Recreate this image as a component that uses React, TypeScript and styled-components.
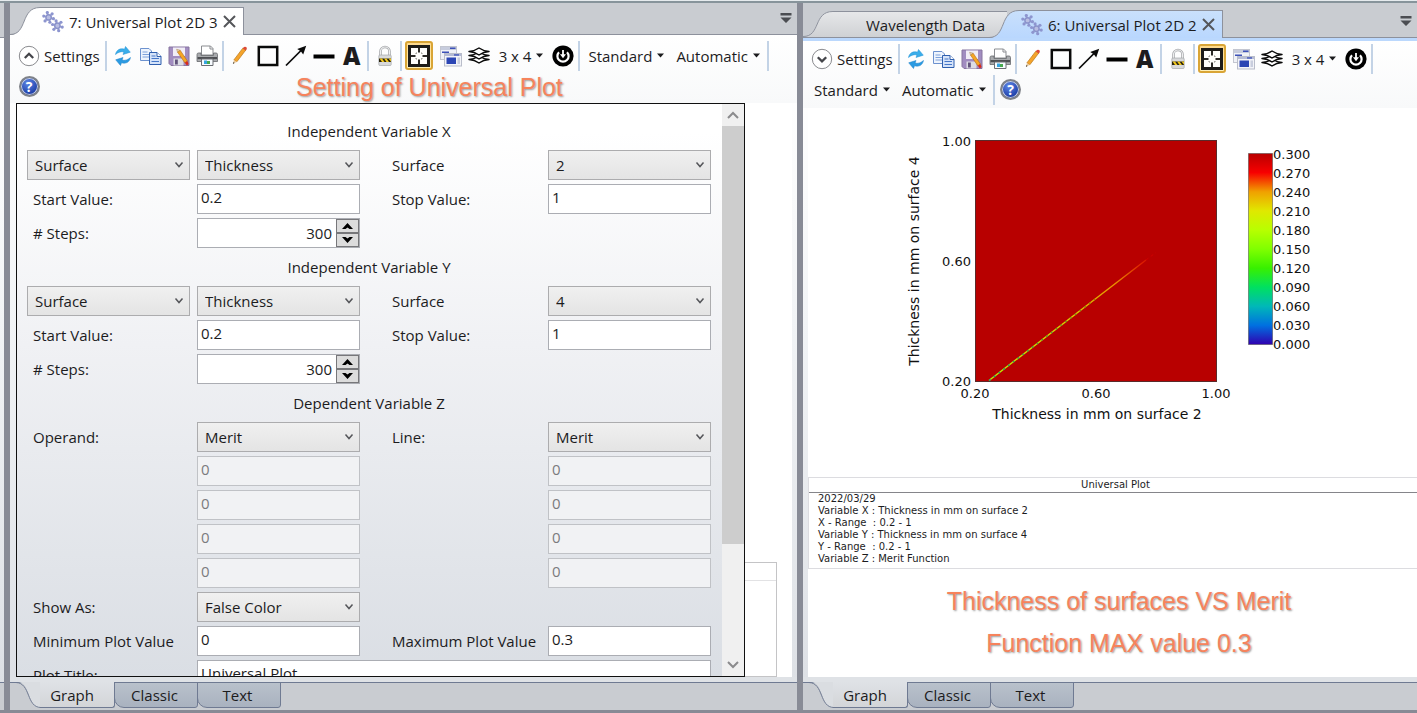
import React, { useId, useState } from "react";
import styled, { createGlobalStyle, css } from "styled-components";

const UI = `"Open Sans", "Segoe UI", sans-serif`;
const PLOT = `"DejaVu Sans", "Lucida Sans", sans-serif`;

const GlobalStyle = createGlobalStyle`
  *, *::before, *::after { box-sizing: border-box; }
  body { margin: 0; background: #c9ccd1; font-family: ${UI}; font-size: 15px; color: #1c1c1e; }
  button, input, select { font: inherit; color: inherit; }
`;

/* ---------- window frame ---------- */

const Shell = styled.div`
  height: 100vh;
  min-height: 480px;
  display: flex;
  flex-direction: column;
  border-top: 1px solid #e6ebee;
  border-bottom: 3px solid #888a95;
  overflow: hidden;
`;

const Workspace = styled.main`
  flex: 1;
  min-height: 0;
  display: grid;
  grid-template-columns: 4px 6px minmax(0, 787fr) 6px minmax(0, 614fr);
  border-top: 2px solid #87949b;
`;

const Splitter = styled.div`
  background: #888b96;
`;

const Pane = styled.section`
  min-width: 0;
  min-height: 0;
  display: flex;
  flex-direction: column;
  background: linear-gradient(#ffffff 12%, #f2f4f6 45%, #dde0e5 97%);
`;

const TabStrip = styled.div<{ $tall?: boolean }>`
  display: flex;
  align-items: flex-end;
  flex: none;
  height: ${(p) => (p.$tall ? 35 : 32)}px;
  background: #c9ccd1;
  border-bottom: 1px solid #8d919c;
`;

const ActiveStripe = styled.div`
  flex: none;
  height: 3px;
  background: #bbd8fd;
`;

type Tone = "white" | "grey" | "blue";
const toneFill: Record<Tone, [string, string]> = {
  white: ["#ffffff", "#ffffff"],
  grey: ["#e6e7e9", "#cfd1d4"],
  blue: ["#c9e0fc", "#b9d7fe"],
};

const TabShell = styled.div<{ $tone: Tone; $overlap?: boolean }>`
  display: flex;
  height: ${(p) => (p.$tone === "grey" ? 26 : 28)}px;
  margin-bottom: ${(p) => (p.$tone === "grey" ? 0 : -1)}px;
  margin-left: ${(p) => (p.$overlap ? -18 : 0)}px;
  position: relative;
`;

const TabEdge = styled.svg`
  display: block;
  width: 30px;
  height: 100%;
`;

const TabBody = styled.div<{ $tone: Tone }>`
  display: flex;
  align-items: center;
  gap: 5px;
  padding: 0 ${(p) => (p.$tone === "grey" ? 22 : 7)}px 0 ${(p) => (p.$tone === "grey" ? 33 : 2)}px;
  background: linear-gradient(${(p) => toneFill[p.$tone].join(",")});
  border-top: 1px solid #8d919c;
  border-right: ${(p) => (p.$tone === "grey" ? 0 : 1)}px solid #8d919c;
`;

const TabName = styled.button`
  border: 0;
  padding: 0;
  background: none;
  white-space: nowrap;
  line-height: 20px;
`;

const IconButton = styled.button`
  display: grid;
  place-items: center;
  border: 0;
  padding: 0;
  background: none;
`;

const StripMenu = styled(IconButton)`
  margin: 0 5px 10px auto;
`;

/* ---------- toolbar ---------- */

const Toolbar = styled.div<{ $compact: boolean }>`
  flex: none;
  display: flex;
  flex-wrap: wrap;
  align-items: center;
  padding: ${(p) => (p.$compact ? "2px 0 3px 5px" : "5px 0 1px 5px")};
  background: linear-gradient(#ffffff, #f8f9fa);
`;

const Tool = styled.button<{ $on?: boolean }>`
  display: grid;
  place-items: center;
  width: 28px;
  height: 31px;
  padding: 0;
  border: 0;
  background: none;
  ${(p) =>
    p.$on &&
    css`
      height: 29px;
      margin: 0 4px 0 1px;
      border: 2px solid #d9a536;
      border-radius: 3px;
      background: linear-gradient(#fdd98d, #fff0b8);
    `}
`;

const TextTool = styled.button`
  display: flex;
  align-items: center;
  gap: 5px;
  height: 31px;
  padding: 0 6px;
  border: 0;
  background: none;
  white-space: nowrap;
`;

const SettingsTool = styled(TextTool)`
  gap: 4px;
  padding: 0 4px 0 3px;
`;

const Divider = styled.span`
  width: 2px;
  height: 30px;
  margin: 0 2px 0 1px;
  background: #c3d3e6;
`;

const Callout = styled.p`
  margin: 0;
  font: 25px/42px "Liberation Sans", Arial, sans-serif;
  color: #f6835c;
  text-align: center;
  text-shadow: 1px 1px 2px #9a9a9a;
`;

const FloatingCallout = styled(Callout)`
  position: absolute;
  top: -37px;
  left: 280px;
  white-space: nowrap;
`;

/* ---------- content ---------- */

const Canvas = styled.div<{ $left: number; $right: number }>`
  flex: 1;
  min-height: 0;
  position: relative;
  display: flex;
  flex-direction: column;
  margin: 0 ${(p) => p.$right}px 0 ${(p) => p.$left}px;
  background: #ffffff;
`;

const HiddenReport = styled.div`
  flex: none;
  height: 115px;
  margin: auto 15px 0 0;
  border: 1px solid #c4c4c6;

  &::before {
    content: "";
    display: block;
    height: 18px;
    border-bottom: 1px solid #e2e2e4;
  }
`;

const SettingsPanel = styled.form`
  position: absolute;
  top: 0;
  bottom: 0;
  left: 0;
  width: 729px;
  display: flex;
  border: 1px solid #101010;
  background: linear-gradient(#ffffff 5%, #f0f1f4 42%, #dadee4);
`;

const Fields = styled.div`
  flex: 1;
  overflow: hidden;
  display: grid;
  grid-template-columns: 163px 163px 174px 163px;
  grid-auto-rows: 34px;
  column-gap: 7px;
  align-items: center;
  align-content: start;
  padding: 10px 10px 0;
`;

const Heading = styled.h2`
  grid-column: 1 / -1;
  margin: 0;
  font-size: 15px;
  font-weight: 400;
  text-align: center;
`;

const Label = styled.label<{ $col: 1 | 3 }>`
  grid-column: ${(p) => p.$col};
  padding-left: ${(p) => (p.$col === 1 ? 6 : 25)}px;
  white-space: nowrap;
`;

const SelectBox = styled.span<{ $col: number }>`
  grid-column: ${(p) => p.$col};
  display: grid;
  height: 30px;
  align-items: center;

  > * { grid-area: 1 / 1; }
  > svg { justify-self: end; margin-right: 6px; pointer-events: none; }
`;

const SelectInput = styled.select`
  appearance: none;
  width: 100%;
  height: 30px;
  padding: 0 20px 0 7px;
  border: 1px solid #acacae;
  border-radius: 0;
  background: linear-gradient(#f0f0f0, #e4e4e4);
`;

const TextInput = styled.input<{ $col: number; $wide?: boolean }>`
  grid-column: ${(p) => (p.$wide ? "2 / 5" : p.$col)};
  width: 100%;
  height: 30px;
  padding: 0 4px 4px 3px;
  border: 1px solid #abadb3;
  border-radius: 0;
  background: #ffffff;

  &:disabled {
    background: #f1f2f4;
    border-color: #c0c2c6;
    color: #7b7b7e;
  }
`;

const Stepper = styled.span`
  grid-column: 2;
  display: flex;
  height: 30px;
  border: 1px solid #abadb3;
  background: #ffffff;
`;

const StepValue = styled.input`
  flex: 1;
  min-width: 0;
  padding: 0 4px;
  border: 0;
  background: none;
  text-align: right;
`;

const StepButtons = styled.span`
  display: grid;
  grid-template-rows: 1fr 1fr;
  width: 23px;
`;

const StepButton = styled.button`
  display: grid;
  place-items: center;
  padding: 0;
  border: 1px solid #77777a;
  background: #dcdcdc;
`;

const ScrollTrack = styled.div`
  flex: none;
  width: 22px;
  display: grid;
  grid-template-rows: 22px 418fr 110fr 22px;
  background: #f0f0f0;
`;

const ScrollThumb = styled.div`
  background: #cdcdcd;
`;

const ChartArea = styled.svg`
  display: block;
  flex: none;
  width: 100%;
  height: 369px;
  font-family: ${PLOT};
`;

const Report = styled.div`
  flex: none;
  border: 1px solid #dcdce0;
  border-width: 1px 0 1px 1px;
  font: 10px/12px ${PLOT};
`;

const ReportTitle = styled.div`
  padding-left: 5px;
  height: 15px;
  line-height: 14px;
  text-align: center;
  border-bottom: 1px solid #85858a;
`;

const ReportBody = styled.pre`
  margin: 0;
  padding: 0 9px 3px;
  font: inherit;
`;

const Notes = styled.div`
  padding: 11px 0 0 13px;
`;

/* ---------- bottom tabs ---------- */

const BottomStrip = styled.div`
  flex: none;
  display: flex;
  height: 33px;
  padding-bottom: 2px;
  border-top: 5px solid #dfe2e6;
  background: #c9ccd1;
  box-shadow: inset 0 1px #6f7a92;
`;

const BottomTab = styled.button<{ $active?: boolean }>`
  width: 84px;
  height: 26px;
  padding: 0 3px 0 0;
  border: 1px solid #6f7a92;
  border-left-width: ${(p) => (p.$active ? 0 : 1)}px;
  border-radius: 0 0 3px 10px;
  background: linear-gradient(#b9c1cb, #a9b2bf);
  margin-left: -1px;

  ${(p) =>
    p.$active &&
    css`
      width: 75px;
      padding-right: 10px;
      margin-left: 0;
      border-top: 0;
      border-radius: 0 0 3px 0;
      background: linear-gradient(#dfe2e6, #d3d5d8);
    `}
`;

const BottomFiller = styled.div`
  height: 28px;
  margin-top: auto;
  background: #c9ccd1;
  border-top: 1px solid #6f7a92;
`;

/* ---------- icons ---------- */

const Svg = ({ s = 22, children }: { s?: number; children: React.ReactNode }) => (
  <svg width={s} height={s} viewBox="0 0 22 22" fill="none" aria-hidden="true">
    {children}
  </svg>
);

const cluster = (cx: number, cy: number) => {
  const pts = [0, 60, 120, 180, 240, 300].map((a) => {
    const r = ((a + 15) * Math.PI) / 180;
    return [cx + 5 * Math.cos(r), cy + 5 * Math.sin(r)];
  });
  return (
    <g>
      {pts.map(([x, y], i) => (
        <g key={i}>
          <path d={`M${cx} ${cy}L${x} ${y}`} stroke="#9aa1cc" strokeWidth="1.4" />
          <circle cx={x} cy={y} r="1.6" fill="#8d95cf" />
        </g>
      ))}
      <circle cx={cx} cy={cy} r="2.7" stroke="#8b93cb" strokeWidth="1.5" fill="#b9bee2" />
    </g>
  );
};

const PlotIcon = () => (
  <Svg>
    {cluster(6.6, 6.4)}
    {cluster(15.4, 14.8)}
  </Svg>
);

const CloseIcon = () => (
  <svg width="13" height="13" viewBox="0 0 13 13" aria-hidden="true">
    <path d="M1 1l11 11M12 1l-11 11" stroke="#55565a" strokeWidth="2" />
  </svg>
);

const MenuIcon = () => (
  <svg width="12" height="12" viewBox="0 0 12 12" aria-hidden="true">
    <path d="M0.500 1h11v2.500h-11zM0.500 5.500h11L6 11z" fill="#4b4d52" />
  </svg>
);

const Caret = () => (
  <svg width="7" height="5" viewBox="0 0 7 5" aria-hidden="true">
    <path d="M0 .5h7L3.500 4.500z" fill="#1c1c1e" />
  </svg>
);

const Chevron = () => (
  <svg width="10" height="8" viewBox="0 0 10 8" fill="none" aria-hidden="true">
    <path d="M1.500 1.500L5 5.500l3.500-4" stroke="#55565a" strokeWidth="1.500" />
  </svg>
);

const CircleChevron = ({ up }: { up: boolean }) => (
  <Svg>
    <circle cx="11" cy="11" r="9.700" stroke="#8a8b8f" fill="#fff" />
    <path d={up ? "M6.800 13l4.200-4.200 4.200 4.200" : "M6.800 9.200l4.200 4.200 4.200-4.200"} stroke="#44454a" strokeWidth="2.300" />
  </Svg>
);

const Refresh = () => (
  <Svg>
    <path d="M3.500 9.500C4.500 4.500 8.500 3 12.500 4.200L13.500 1.500l4.800 5.700-7.300 2.300.9-2.600C9 6.300 6.500 7 3.500 9.500z" fill="#3aaeea" stroke="#1f8fd4" strokeWidth=".5" />
    <path d="M18.500 12.500c-1 5-5 6.500-9 5.300l-1 2.700-4.800-5.700 7.300-2.300-.9 2.600c2.900.6 5.400-.1 8.400-2.600z" fill="#2b9be2" stroke="#1a7fc6" strokeWidth=".5" />
  </Svg>
);

const Copy = () => (
  <Svg>
    <path d="M.5 3.500h8.500l2.500 2.500v9.500H.5z" fill="#eef4fd" stroke="#6d92cf" />
    <path d="M2.500 7h5M2.500 9.500h7M2.500 12h7" stroke="#7ea2dc" />
    <path d="M9.500 7.500h7.500l4 4v8h-11.500z" fill="#d5e3f9" stroke="#2f5fae" />
    <path d="M17 7.500v4h4" fill="#fff" stroke="#2f5fae" />
    <path d="M11.500 11h4M11.500 13.500h7.500M11.500 16.500h7.500" stroke="#4677c8" />
  </Svg>
);

const Save = () => (
  <Svg>
    <path d="M1 2h20v18.500H3L1 18.500z" fill="#a18cc0" stroke="#87749f" />
    <path d="M5 2.500h12v8.500H5z" fill="#f1edf6" />
    <path d="M5.500 13.500h10v7h-10z" fill="#dcdde4" />
    <path d="M7 14.500h2.800v5H7z" fill="#62547c" />
    <path d="M9.500 7l2.600-1.800 7.300 10.800-2.600 1.800z" fill="#f6a623" stroke="#b56c11" strokeWidth=".6" />
    <path d="M16.800 17.800l2.600-1.800 1.200 3-1.700 1.500z" fill="#d92a1c" />
    <path d="M9.500 7L8.600 4.200l3.500 1z" fill="#f3d6a6" stroke="#8a6a3a" strokeWidth=".4" />
  </Svg>
);

const Printer = () => (
  <Svg>
    <path d="M5.500 1h9L17 3.500V10H5.500z" fill="#fff" stroke="#8b8d91" />
    <path d="M14 1v3h3" stroke="#8b8d91" />
    <path d="M1 9.500Q1 8 2.500 8H5v2.500h12.500V8H20q1.500 0 1.500 1.500V16.500H1z" fill="#a9abae" stroke="#66686c" strokeWidth=".8" />
    <path d="M1.500 12h19.500v2.200H1.500z" fill="#4e5054" />
    <path d="M5.500 14h11.500v6.500H5.500z" fill="#f7fbff" stroke="#6b6d72" />
    <path d="M8 15.500h3v3.500H8z" fill="#35a4e0" />
    <path d="M11 16h3v3h-3z" fill="#47a94f" />
  </Svg>
);

const Pencil = () => (
  <Svg>
    <path d="M13.800 3.200l3 1.800-9 11.800-2.900-1.900z" fill="#f5a42b" stroke="#b87517" strokeWidth=".7" />
    <path d="M14.600 2.200q1.200-1 2.500-.1t.5 2.400l-.8 1-3-2z" fill="#dc4b37" />
    <path d="M4.900 14.900l2.900 1.900L3.900 19z" fill="#e9c796" />
    <path d="M4.500 17l1 1L3.900 19z" fill="#333" />
  </Svg>
);

const Box = () => (
  <Svg>
    <rect x="1.800" y="2" width="18.400" height="18" stroke="#0a0a0a" strokeWidth="2.500" />
  </Svg>
);

const Arrow = () => (
  <Svg>
    <path d="M1 20.500L16 5.500" stroke="#0a0a0a" strokeWidth="1.700" />
    <path d="M21.200.8L18.200 9.500l-2.400-3.200-3.600-2.400z" fill="#0a0a0a" />
  </Svg>
);

const Line = () => (
  <Svg>
    <path d="M.5 11.500h21" stroke="#000" strokeWidth="4" />
  </Svg>
);

const LetterIcon = styled.span`
  font: 800 24px/24px "Open Sans", sans-serif;
`;

const Lock = () => (
  <Svg>
    <path d="M6.500 11V6.500a4.500 4.500 0 0 1 9 0V11" stroke="#a3a5a8" strokeWidth="2.600" />
    <path d="M6.500 11V6.500a4.500 4.500 0 0 1 9 0V11" stroke="#eeeff0" strokeWidth="1.200" />
    <rect x="4.800" y="10" width="12.400" height="10.500" rx="1" fill="#d8d9db" stroke="#9b9da1" strokeWidth=".6" />
    <path d="M5 13.500h12v3.500H5z" fill="#2a2410" />
    <path d="M5.500 13.500h2.500l2.500 3.500H8zM10 13.500h2.500l2.500 3.500h-2.500zM14.500 13.500H17v3.200z" fill="#f0c71d" />
  </Svg>
);

const FitIcon = () => (
  <Svg>
    <rect x="1.500" y="1.500" width="19" height="19" fill="#fffefa" stroke="#1e1c18" strokeWidth="3" />
    <path d="M11 3v4.500M11 14.500V19M3 11h4.500M14.500 11H19" stroke="#2b2924" strokeWidth="2" />
    <path d="M8 9V8h1M14 9V8h-1M8 13v1h1M14 13v1h-1" stroke="#8d8a82" />
  </Svg>
);

const Windows = () => (
  <Svg>
    <rect x=".5" y="1.500" width="16" height="13" fill="#f0f2f7" stroke="#c3c6d0" />
    <path d="M1 2h15v3H1z" fill="#c7ccdd" />
    <path d="M10 2.500h5.500v1.500H10zM2 6.500h7v1.500H2z" fill="#3c51b8" />
    <rect x="4.500" y="8.500" width="17" height="12.500" fill="#f3f4f8" stroke="#b9bdca" />
    <path d="M5 9h16v2H5z" fill="#b4bbd6" />
    <path d="M14 9.300h5v1.300h-5z" fill="#3c51b8" />
    <path d="M6.500 12.500h9.500v6.500H6.500z" fill="#2b45b4" />
    <path d="M17.500 12.500H20v6.500h-2.500z" fill="#c9cede" />
  </Svg>
);

const Layers = () => (
  <Svg>
    {[14.500, 10.500, 6.500].map((y) => (
      <path key={y} d={`M1 ${y}q5.500-.4 10-3.500q4.500 3.100 10 3.500q-5.500.4-10 3.500q-4.500-3.100-10-3.500z`} fill="#fff" stroke="#0a0a0a" strokeWidth="1.500" strokeLinejoin="round" />
    ))}
  </Svg>
);

const ResetIcon = () => (
  <Svg>
    <circle cx="11" cy="11" r="10.600" fill="#000" />
    <path d="M7 7.200a5.600 5.600 0 1 0 8 0" stroke="#fff" strokeWidth="2.200" />
    <path d="M11 5v5" stroke="#fff" strokeWidth="1.800" />
    <path d="M8 9.300h6l-3 4z" fill="#fff" />
  </Svg>
);

const HelpMark = styled.span`
  display: grid;
  place-items: center;
  width: 21px;
  height: 21px;
  border: 2px solid #7f8288;
  border-radius: 50%;
  background: radial-gradient(circle at 40% 30%, #5d86e6, #1e3fa8 70%);
  box-shadow: inset 0 0 0 1px #c9d0e2;
  color: #ffffff;
  font: 700 14px/16px ${UI};
`;

/* ---------- composed parts ---------- */

const Tab = ({ tone, name, icon, overlap }: { tone: Tone; name: string; icon?: boolean; overlap?: boolean }) => {
  const id = useId();
  return (
    <TabShell $tone={tone} $overlap={overlap}>
      <TabEdge viewBox="0 0 30 28" preserveAspectRatio="none" aria-hidden="true">
        <defs>
          <linearGradient id={id} x1="0" y1="0" x2="0" y2="1">
            <stop offset="0" stopColor={toneFill[tone][0]} />
            <stop offset="1" stopColor={toneFill[tone][1]} />
          </linearGradient>
        </defs>
        <path d="M0 28C18 28 10 .5 30 .5V28z" fill={`url(#${id})`} />
        <path d="M0 27.500C18 27.500 10 .5 30 .5" fill="none" stroke="#8d919c" />
      </TabEdge>
      <TabBody $tone={tone}>
        {icon && <PlotIcon />}
        <TabName type="button">{name}</TabName>
        {icon && (
          <IconButton type="button" aria-label="Close tab">
            <CloseIcon />
          </IconButton>
        )}
      </TabBody>
    </TabShell>
  );
};

const PlotToolbar = ({ open }: { open: boolean }) => (
  <Toolbar $compact={!open}>
    <SettingsTool type="button" aria-expanded={open}>
      <CircleChevron up={open} />
      Settings
    </SettingsTool>
    <Divider />
    <Tool type="button" aria-label="Update"><Refresh /></Tool>
    <Tool type="button" aria-label="Copy"><Copy /></Tool>
    <Tool type="button" aria-label="Save as"><Save /></Tool>
    <Tool type="button" aria-label="Print"><Printer /></Tool>
    <Divider />
    <Tool type="button" aria-label="Annotate"><Pencil /></Tool>
    <Tool type="button" aria-label="Box"><Box /></Tool>
    <Tool type="button" aria-label="Arrow"><Arrow /></Tool>
    <Tool type="button" aria-label="Line"><Line /></Tool>
    <Tool type="button" aria-label="Text"><LetterIcon>A</LetterIcon></Tool>
    <Divider />
    <Tool type="button" aria-label="Lock"><Lock /></Tool>
    <Divider />
    <Tool type="button" aria-label="Fit" $on><FitIcon /></Tool>
    <Tool type="button" aria-label="Windows"><Windows /></Tool>
    <Tool type="button" aria-label="Layers"><Layers /></Tool>
    <TextTool type="button">3 x 4 <Caret /></TextTool>
    <Tool type="button" aria-label="Reset"><ResetIcon /></Tool>
    <Divider />
    <TextTool type="button">Standard <Caret /></TextTool>
    <TextTool type="button">Automatic <Caret /></TextTool>
    <Divider />
    <Tool type="button" aria-label="Help"><HelpMark>?</HelpMark></Tool>
  </Toolbar>
);

const Choice = ({ id, col, value, label }: { id?: string; col: number; value: string; label?: string }) => (
  <SelectBox $col={col}>
    <SelectInput id={id} aria-label={label} defaultValue={value}>
      <option>{value}</option>
    </SelectInput>
    <Chevron />
  </SelectBox>
);

const Steps = ({ id }: { id: string }) => {
  const [n, setN] = useState(300);
  return (
    <Stepper>
      <StepValue id={id} value={n} onChange={(e) => setN(Number(e.target.value) || 0)} />
      <StepButtons>
        <StepButton type="button" aria-label="More" onClick={() => setN(n + 1)}>
          <svg width="11" height="6" viewBox="0 0 11 6"><path d="M0 6l5.500-6L11 6H7.500l-2-1.500-2 1.500z" fill="#000" /></svg>
        </StepButton>
        <StepButton type="button" aria-label="Fewer" onClick={() => setN(n - 1)}>
          <svg width="11" height="6" viewBox="0 0 11 6"><path d="M0 0l5.500 6L11 0H7.500l-2 1.500L3.500 0z" fill="#000" /></svg>
        </StepButton>
      </StepButtons>
    </Stepper>
  );
};

const IndependentVariable = ({ axis, surface }: { axis: "X" | "Y"; surface: string }) => (
  <>
    <Heading>Independent Variable {axis}</Heading>
    <Choice col={1} value="Surface" label={`Variable ${axis} group`} />
    <Choice col={2} value="Thickness" label={`Variable ${axis} parameter`} />
    <Label $col={3} htmlFor={`surface-${axis}`}>Surface</Label>
    <Choice id={`surface-${axis}`} col={4} value={surface} />
    <Label $col={1} htmlFor={`start-${axis}`}>Start Value:</Label>
    <TextInput $col={2} id={`start-${axis}`} defaultValue="0.2" />
    <Label $col={3} htmlFor={`stop-${axis}`}>Stop Value:</Label>
    <TextInput $col={4} id={`stop-${axis}`} defaultValue="1" />
    <Label $col={1} htmlFor={`steps-${axis}`}># Steps:</Label>
    <Steps id={`steps-${axis}`} />
  </>
);

const Scrollbar = () => (
  <ScrollTrack>
    <IconButton type="button" aria-label="Scroll up">
      <svg width="12" height="8" viewBox="0 0 12 8" fill="none"><path d="M1 7l5-5 5 5" stroke="#8b8b8d" strokeWidth="2" /></svg>
    </IconButton>
    <ScrollThumb />
    <span />
    <IconButton type="button" aria-label="Scroll down">
      <svg width="12" height="8" viewBox="0 0 12 8" fill="none"><path d="M1 1l5 5 5-5" stroke="#8b8b8d" strokeWidth="2" /></svg>
    </IconButton>
  </ScrollTrack>
);

const Settings = () => (
  <SettingsPanel>
    <Fields>
      <IndependentVariable axis="X" surface="2" />
      <IndependentVariable axis="Y" surface="4" />
      <Heading>Dependent Variable Z</Heading>
      <Label $col={1} htmlFor="operand">Operand:</Label>
      <Choice id="operand" col={2} value="Merit" />
      <Label $col={3} htmlFor="line">Line:</Label>
      <Choice id="line" col={4} value="Merit" />
      {[1, 2, 3, 4].map((n) => (
        <React.Fragment key={n}>
          <TextInput $col={2} disabled defaultValue="0" aria-label={`Operand argument ${n}`} />
          <TextInput $col={4} disabled defaultValue="0" aria-label={`Line argument ${n}`} />
        </React.Fragment>
      ))}
      <Label $col={1} htmlFor="show-as">Show As:</Label>
      <Choice id="show-as" col={2} value="False Color" />
      <Label $col={1} htmlFor="min">Minimum Plot Value</Label>
      <TextInput $col={2} id="min" defaultValue="0" />
      <Label $col={3} htmlFor="max">Maximum Plot Value</Label>
      <TextInput $col={4} id="max" defaultValue="0.3" />
      <Label $col={1} htmlFor="plot-title">Plot Title:</Label>
      <TextInput $col={2} $wide id="plot-title" defaultValue="Universal Plot" />
    </Fields>
    <Scrollbar />
  </SettingsPanel>
);

const scale = ["0.300", "0.270", "0.240", "0.210", "0.180", "0.150", "0.120", "0.090", "0.060", "0.030", "0.000"];
const ramp = ["#b80000", "#f80000", "#f0a000", "#e0e800", "#b8ff00", "#80ff00", "#38f000", "#00e060", "#00b8b8", "#0070e0", "#3000b0"];

const Chart = () => (
  <ChartArea viewBox="0 0 609 369" role="img" aria-label="Merit function against the thickness of surfaces 2 and 4">
    <defs>
      <linearGradient id="ramp" x1="0" y1="0" x2="0" y2="1">
        {ramp.map((c, i) => <stop key={c} offset={i / 10} stopColor={c} />)}
      </linearGradient>
      <linearGradient id="valley" gradientUnits="userSpaceOnUse" x1="181" y1="272" x2="350" y2="143">
        <stop offset="0" stopColor="#b8f000" />
        <stop offset=".5" stopColor="#dcd000" />
        <stop offset=".75" stopColor="#ea9000" />
        <stop offset=".9" stopColor="#e02000" />
        <stop offset="1" stopColor="#b80000" />
      </linearGradient>
      <linearGradient id="deep" gradientUnits="userSpaceOnUse" x1="181" y1="272" x2="290" y2="190">
        <stop offset="0" stopColor="#20a070" />
        <stop offset="1" stopColor="#a08000" />
      </linearGradient>
    </defs>
    <rect x="167.500" y="32.500" width="241" height="241" fill="#b80000" stroke="#5a2a2a" />
    <path d="M181 272.500L338 152" stroke="url(#valley)" strokeWidth="1.400" />
    <path d="M181 272.500L290 189" stroke="url(#deep)" strokeWidth="1.500" strokeDasharray="2 4" />
    <path d="M338 152L348 144.500" stroke="#d00000" strokeDasharray="3 3" />
    <g fontSize="13" textAnchor="end" fill="#111">
      <text x="163" y="38">1.00</text>
      <text x="163" y="158">0.60</text>
      <text x="163" y="278">0.20</text>
    </g>
    <g fontSize="13" textAnchor="middle" fill="#111">
      <text x="167" y="290">0.20</text>
      <text x="288" y="290">0.60</text>
      <text x="408" y="290">1.00</text>
    </g>
    <g fontSize="14" textAnchor="middle" fill="#111">
      <text x="289" y="311">Thickness in mm on surface 2</text>
      <text x="111" y="153" transform="rotate(-90 111 153)">Thickness in mm on surface 4</text>
    </g>
    <rect x="440.500" y="45.500" width="24" height="191" fill="url(#ramp)" stroke="#444" strokeOpacity=".5" />
    <g fontSize="13" fill="#111">
      {scale.map((v, i) => <text key={v} x="465" y={51 + i * 19}>{v}</text>)}
    </g>
  </ChartArea>
);

const reportText = `2022/03/29
Variable X : Thickness in mm on surface 2
X - Range  : 0.2 - 1
Variable Y : Thickness in mm on surface 4
Y - Range  : 0.2 - 1
Variable Z : Merit Function`;

const TabCurve = styled.svg`
  display: block;
  flex: none;
  width: 30px;
  height: 26px;
`;

const BottomTabs = () => (
  <BottomStrip>
    <TabCurve viewBox="0 0 30 26" aria-hidden="true">
      <path d="M0 0h7C22 0 16 25 30 25.500V0z" fill="#dadde1" />
      <path d="M0 .5h6C21 1 16 25.500 31 25.500" fill="none" stroke="#6f7a92" />
    </TabCurve>
    <BottomTab type="button" $active>Graph</BottomTab>
    <BottomTab type="button">Classic</BottomTab>
    <BottomTab type="button">Text</BottomTab>
  </BottomStrip>
);

export default function App() {
  return (
    <Shell>
      <GlobalStyle />
      <Workspace>
        <Pane>
          <TabStrip $tall />
          <BottomFiller />
        </Pane>
        <Splitter />
        <Pane>
          <TabStrip>
            <Tab tone="white" name="7: Universal Plot 2D 3" icon />
            <StripMenu type="button" aria-label="Window list"><MenuIcon /></StripMenu>
          </TabStrip>
          <PlotToolbar open />
          <Canvas $left={6} $right={5}>
            <HiddenReport />
            <Settings />
            <FloatingCallout>Setting of Universal Plot</FloatingCallout>
          </Canvas>
          <BottomTabs />
        </Pane>
        <Splitter />
        <Pane>
          <TabStrip $tall>
            <Tab tone="grey" name="Wavelength Data" />
            <Tab tone="blue" name="6: Universal Plot 2D 2" icon overlap />
            <StripMenu type="button" aria-label="Window list"><MenuIcon /></StripMenu>
          </TabStrip>
          <ActiveStripe />
          <PlotToolbar open={false} />
          <Canvas $left={5} $right={0}>
            <Chart />
            <Report>
              <ReportTitle>Universal Plot</ReportTitle>
              <ReportBody>{reportText}</ReportBody>
            </Report>
            <Notes>
              <Callout>Thickness of surfaces VS Merit</Callout>
              <Callout>Function MAX value 0.3</Callout>
            </Notes>
          </Canvas>
          <BottomTabs />
        </Pane>
      </Workspace>
    </Shell>
  );
}
